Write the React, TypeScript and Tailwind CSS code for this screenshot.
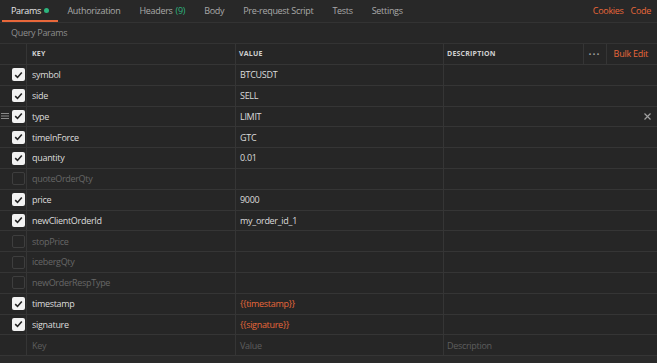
import React from 'react';

type Row = { key: string; value: string; on: boolean; tpl?: boolean };

const rows: Row[] = [
  { key: 'symbol', value: 'BTCUSDT', on: true },
  { key: 'side', value: 'SELL', on: true },
  { key: 'type', value: 'LIMIT', on: true },
  { key: 'timeInForce', value: 'GTC', on: true },
  { key: 'quantity', value: '0.01', on: true },
  { key: 'quoteOrderQty', value: '', on: false },
  { key: 'price', value: '9000', on: true },
  { key: 'newClientOrderId', value: 'my_order_id_1', on: true },
  { key: 'stopPrice', value: '', on: false },
  { key: 'icebergQty', value: '', on: false },
  { key: 'newOrderRespType', value: '', on: false },
  { key: 'timestamp', value: '{{timestamp}}', on: true, tpl: true },
  { key: 'signature', value: '{{signature}}', on: true, tpl: true },
];

const tabs = ['Authorization', 'Headers', 'Body', 'Pre-request Script', 'Tests', 'Settings'];

function Check({ on }: { on: boolean }) {
  if (!on) return <div className="w-[13px] h-[13px] rounded-[2px] border border-[#3e3e3e]" />;
  return (
    <div className="w-[13px] h-[13px] rounded-[2px] bg-[#f2f2f2] flex items-center justify-center">
      <svg width="9" height="8" viewBox="0 0 9 8">
        <path d="M1.2 4.2 L3.5 6.4 L7.8 1.4" fill="none" stroke="#222" strokeWidth="1.6" />
      </svg>
    </div>
  );
}

export default function App() {
  return (
    <div className="w-[657px] h-[363px] overflow-hidden bg-[#2a2a2a] text-[9px] tracking-[-0.3px] text-[#d6d6d6]" style={{ fontFamily: '"Open Sans", sans-serif' }}>
      {/* Tabs */}
      <div className="h-[23px] flex items-stretch border-b border-[#333] pl-[2px] bg-[#282828]">
        <div className="px-[9px] pt-[1px] flex items-center gap-[3px] border-b-2 border-[#e8673a] text-[#e6e6e6]">
          Params <span className="w-[5px] h-[5px] rounded-full bg-[#2db57e]" />
        </div>
        {tabs.map((t) => (
          <div key={t} className="px-[9.5px] flex items-center text-[#a8a8a8]">
            {t}
            {t === 'Headers' && <span className="ml-[3px] text-[#2db57e]">(9)</span>}
          </div>
        ))}
        <div className="ml-auto flex items-center gap-[7px] pr-[6px] text-[#e8673a]">
          <span>Cookies</span>
          <span>Code</span>
        </div>
      </div>

      <div className="h-[21px] flex items-center px-[11px] text-[#8d8d8d] border-b border-[#333] bg-[#272727]">
        Query Params
      </div>

      <div className="bg-[#262626]">
        {/* Header */}
        <div className="grid grid-cols-[27px_209px_208px_1fr] h-[21px] border-b border-[#353535] text-[7px] font-bold text-[#d0d0d0] tracking-[0.2px]">
          <div className="border-r border-[#353535]" />
          <div className="border-r border-[#353535] flex items-center px-[5px]">KEY</div>
          <div className="border-r border-[#353535] flex items-center px-[3px]">VALUE</div>
          <div className="flex items-center">
            <span className="pl-[3px] flex-1">DESCRIPTION</span>
            <span className="h-full border-l border-r border-[#353535] w-[24px] flex items-center justify-center text-[#9a9a9a] text-[8px] font-normal tracking-[1px]">•••</span>
            <span className="pl-[7px] pr-[9px] text-[#e8673a] text-[9px] font-normal tracking-[-0.25px]">Bulk Edit</span>
          </div>
        </div>

        {rows.map((r, i) => (
          <div key={r.key} className="grid grid-cols-[27px_209px_208px_1fr] h-[20.8px] border-b border-[#353535]">
            <div className="border-r border-[#353535] flex items-center justify-end pr-[1px] gap-[2px]">
              {i === 2 && (
                <svg width="8" height="6" viewBox="0 0 8 6" className="mr-[1px]">
                  <path d="M0 0.5H8M0 3H8M0 5.5H8" stroke="#8a8a8a" strokeWidth="1" />
                </svg>
              )}
              <Check on={r.on} />
            </div>
            <div className={`border-r border-[#353535] flex items-center px-[5px] ${r.on ? 'text-[#dcdcdc]' : 'text-[#666]'}`}>
              {r.key}
            </div>
            <div className={`border-r border-[#353535] flex items-center px-[4px] ${r.tpl ? 'text-[#e8673a]' : 'text-[#dcdcdc]'}`}>
              {r.value}
            </div>
            <div className="flex items-center justify-end pr-[6px]">
              {i === 2 && (
                <svg width="7" height="7" viewBox="0 0 7 7">
                  <path d="M0.5 0.5L6.5 6.5M6.5 0.5L0.5 6.5" stroke="#a0a0a0" strokeWidth="1.2" />
                </svg>
              )}
            </div>
          </div>
        ))}

        <div className="grid grid-cols-[27px_209px_208px_1fr] h-[20.8px] border-b border-[#353535] text-[#5e5e5e]">
          <div className="border-r border-[#353535]" />
          <div className="border-r border-[#353535] flex items-center px-[5px]">Key</div>
          <div className="border-r border-[#353535] flex items-center px-[4px]">Value</div>
          <div className="flex items-center px-[3px]">Description</div>
        </div>
      </div>
    </div>
  );
}
